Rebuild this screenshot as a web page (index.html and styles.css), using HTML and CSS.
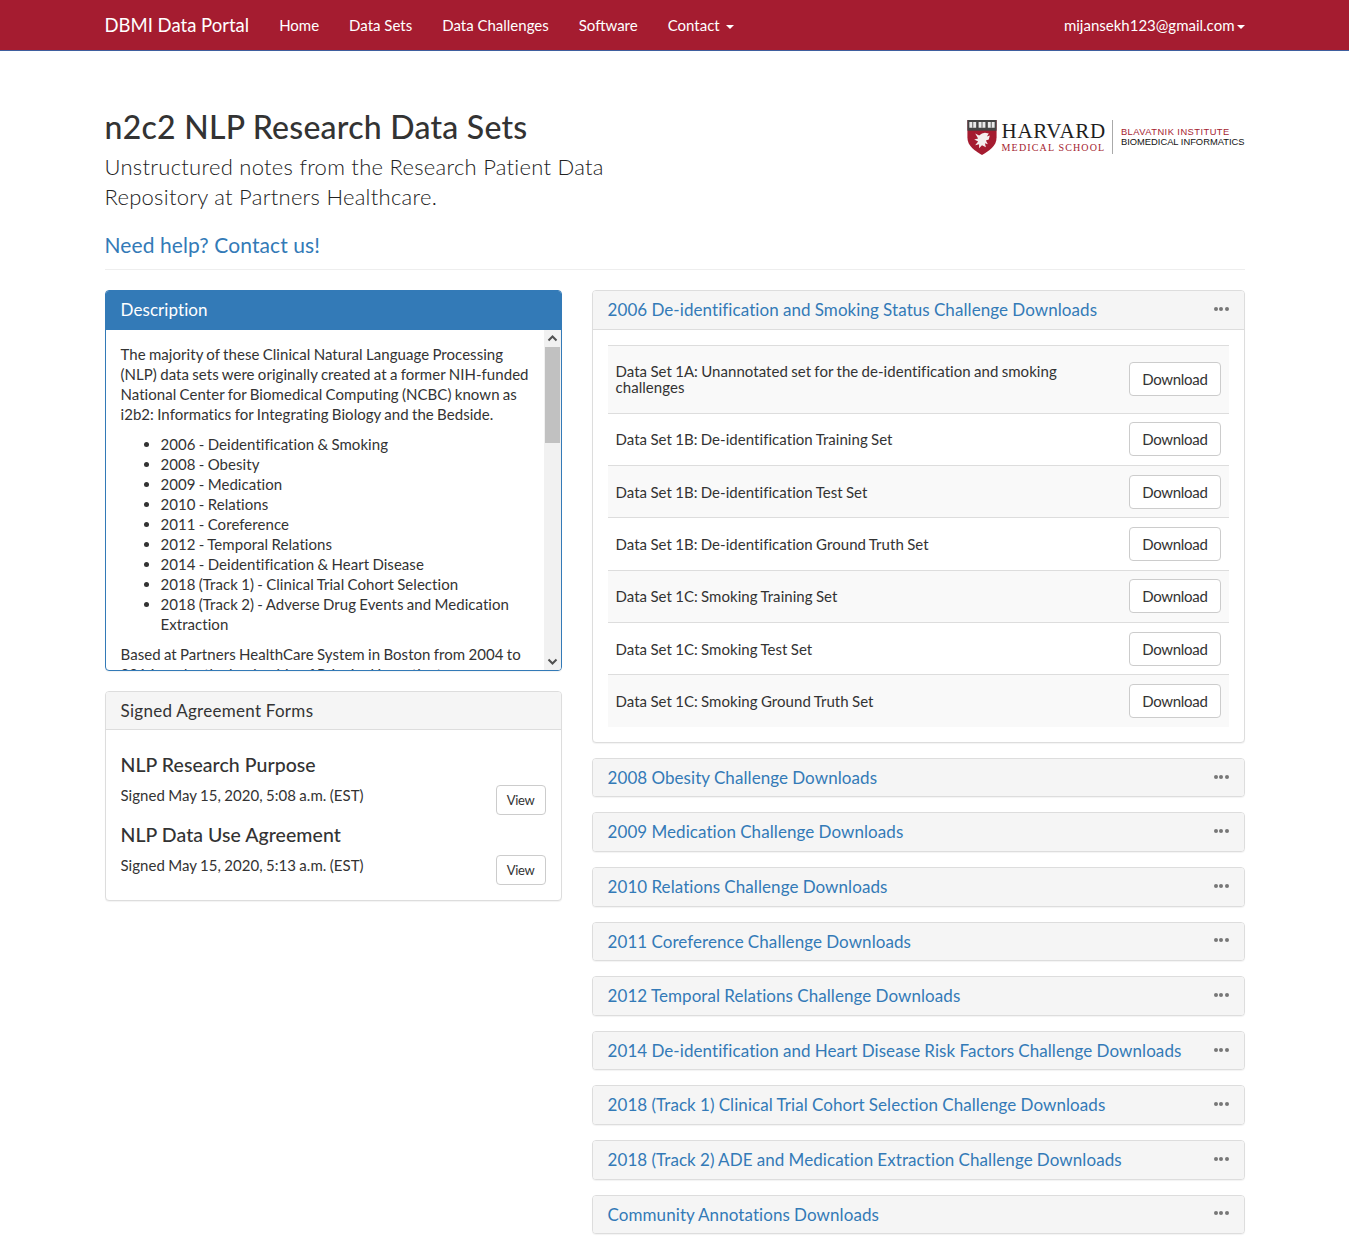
FILE: index.html
```html
<!DOCTYPE html>
<html lang="en">
<head>
    <meta charset="UTF-8">
    <meta name="viewport" content="width=device-width, initial-scale=1.0">
    <title>n2c2 NLP Research Data Sets</title>
    <link rel="stylesheet" href="styles.css">
</head>
<body>
    <nav class="navbar">
        <div class="container navbar-inner">
            <a class="brand" href="#">DBMI Data Portal</a>
            <ul class="nav-links">
                <li><a href="#">Home</a></li>
                <li><a href="#">Data Sets</a></li>
                <li><a href="#">Data Challenges</a></li>
                <li><a href="#">Software</a></li>
                <li><a href="#">Contact <span class="caret"></span></a></li>
            </ul>
            <a class="nav-user" href="#">mijansekh123@gmail.com<span class="caret"></span></a>
        </div>
    </nav>

    <div class="container">
        <header class="page-header">
            <div class="page-intro">
                <h1>n2c2 NLP Research Data Sets</h1>
                <p class="lead">Unstructured notes from the Research Patient Data Repository at Partners Healthcare.</p>
                <a class="help-link" href="#">Need help? Contact us!</a>
            </div>
            <div class="logo">
                <svg class="shield" width="30" height="35" viewBox="0 0 30 36">
                    <path d="M0 0H30V18C30 27 22 32 15 36C8 32 0 27 0 18Z" fill="#a51c30"/>
                    <path d="M0 0H30V11H0Z" fill="#444"/>
                    <path d="M2 2H9V8H2ZM11.500 2H18.500V8H11.500ZM21 2H28V8H21Z" fill="#e8e8e8"/>
                    <path d="M5.500 2V8M15 2V8M24.500 2V8" stroke="#555" stroke-width="1"/>
                    <path d="M8 14L12 16L15 14L18 13L22 14L20 17L23 16L22 20L19 21L21 25L18 24L19 28L15 26L12 29L12 25L8 26L11 22L7 20L11 19Z" fill="#f4efee"/>
                </svg>
                <div class="logo-hms">
                    <span class="logo-harvard">HARVARD</span>
                    <span class="logo-school">MEDICAL SCHOOL</span>
                </div>
                <div class="logo-dbmi">
                    <span class="logo-blav">BLAVATNIK INSTITUTE</span>
                    <span class="logo-bio">BIOMEDICAL INFORMATICS</span>
                </div>
            </div>
        </header>
        <hr class="divider">

        <div class="columns">
            <div class="col-left">
                <section class="panel panel-primary">
                    <div class="panel-heading">Description</div>
                    <div class="scroll-wrap">
                        <div class="scroll-text">
                            <p>The majority of these Clinical Natural Language Processing (NLP) data sets were originally created at a former NIH-funded National Center for Biomedical Computing (NCBC) known as i2b2: Informatics for Integrating Biology and the Bedside.</p>
                            <ul>
                                <li>2006 - Deidentification &amp; Smoking</li>
                                <li>2008 - Obesity</li>
                                <li>2009 - Medication</li>
                                <li>2010 - Relations</li>
                                <li>2011 - Coreference</li>
                                <li>2012 - Temporal Relations</li>
                                <li>2014 - Deidentification &amp; Heart Disease</li>
                                <li>2018 (Track 1) - Clinical Trial Cohort Selection</li>
                                <li>2018 (Track 2) - Adverse Drug Events and Medication Extraction</li>
                            </ul>
                            <p>Based at Partners HealthCare System in Boston from 2004 to 2014, under the leadership of Principal Investigator</p>
                        </div>
                        <div class="scrollbar">
                            <svg class="scroll-arrow" width="17" height="17" viewBox="0 0 17 17"><path d="M4.500 10.500L8.500 6.500L12.500 10.500" fill="none" stroke="#505050" stroke-width="2"/></svg>
                            <div class="scroll-track"><div class="scroll-thumb"></div></div>
                            <svg class="scroll-arrow" width="17" height="17" viewBox="0 0 17 17"><path d="M4.500 6.500L8.500 10.500L12.500 6.500" fill="none" stroke="#505050" stroke-width="2"/></svg>
                        </div>
                    </div>
                </section>

                <section class="panel">
                    <div class="panel-heading panel-heading-wide">Signed Agreement Forms</div>
                    <div class="panel-body forms">
                        <div class="form-item">
                            <div>
                                <h4>NLP Research Purpose</h4>
                                <p>Signed May 15, 2020, 5:08 a.m. (EST)</p>
                            </div>
                            <a class="btn btn-sm" href="#">View</a>
                        </div>
                        <div class="form-item">
                            <div>
                                <h4>NLP Data Use Agreement</h4>
                                <p>Signed May 15, 2020, 5:13 a.m. (EST)</p>
                            </div>
                            <a class="btn btn-sm" href="#">View</a>
                        </div>
                    </div>
                </section>
            </div>

            <div class="col-right">
                <section class="panel panel-open">
                    <div class="panel-heading accordion-heading">
                        <a href="#">2006 De-identification and Smoking Status Challenge Downloads</a>
                        <span class="dots"><i></i><i></i><i></i></span>
                    </div>
                    <div class="panel-body downloads">
                        <div class="download-row download-row-tall">
                            <span class="download-name">Data Set 1A: Unannotated set for the de-identification and smoking challenges</span>
                            <a class="btn" href="#">Download</a>
                        </div>
                        <div class="download-row">
                            <span class="download-name">Data Set 1B: De-identification Training Set</span>
                            <a class="btn" href="#">Download</a>
                        </div>
                        <div class="download-row">
                            <span class="download-name">Data Set 1B: De-identification Test Set</span>
                            <a class="btn" href="#">Download</a>
                        </div>
                        <div class="download-row">
                            <span class="download-name">Data Set 1B: De-identification Ground Truth Set</span>
                            <a class="btn" href="#">Download</a>
                        </div>
                        <div class="download-row">
                            <span class="download-name">Data Set 1C: Smoking Training Set</span>
                            <a class="btn" href="#">Download</a>
                        </div>
                        <div class="download-row">
                            <span class="download-name">Data Set 1C: Smoking Test Set</span>
                            <a class="btn" href="#">Download</a>
                        </div>
                        <div class="download-row">
                            <span class="download-name">Data Set 1C: Smoking Ground Truth Set</span>
                            <a class="btn" href="#">Download</a>
                        </div>
                    </div>
                </section>

                <section class="panel panel-closed"><div class="panel-heading accordion-heading"><a href="#">2008 Obesity Challenge Downloads</a><span class="dots"><i></i><i></i><i></i></span></div></section>
                <section class="panel panel-closed"><div class="panel-heading accordion-heading"><a href="#">2009 Medication Challenge Downloads</a><span class="dots"><i></i><i></i><i></i></span></div></section>
                <section class="panel panel-closed"><div class="panel-heading accordion-heading"><a href="#">2010 Relations Challenge Downloads</a><span class="dots"><i></i><i></i><i></i></span></div></section>
                <section class="panel panel-closed"><div class="panel-heading accordion-heading"><a href="#">2011 Coreference Challenge Downloads</a><span class="dots"><i></i><i></i><i></i></span></div></section>
                <section class="panel panel-closed"><div class="panel-heading accordion-heading"><a href="#">2012 Temporal Relations Challenge Downloads</a><span class="dots"><i></i><i></i><i></i></span></div></section>
                <section class="panel panel-closed"><div class="panel-heading accordion-heading"><a href="#">2014 De-identification and Heart Disease Risk Factors Challenge Downloads</a><span class="dots"><i></i><i></i><i></i></span></div></section>
                <section class="panel panel-closed"><div class="panel-heading accordion-heading"><a href="#">2018 (Track 1) Clinical Trial Cohort Selection Challenge Downloads</a><span class="dots"><i></i><i></i><i></i></span></div></section>
                <section class="panel panel-closed"><div class="panel-heading accordion-heading"><a href="#">2018 (Track 2) ADE and Medication Extraction Challenge Downloads</a><span class="dots"><i></i><i></i><i></i></span></div></section>
                <section class="panel panel-closed"><div class="panel-heading accordion-heading"><a href="#">Community Annotations Downloads</a><span class="dots"><i></i><i></i><i></i></span></div></section>
            </div>
        </div>
    </div>
</body>
</html>
```

FILE: styles.css
```css
* {
    box-sizing: border-box;
}
body {
    margin: 0;
    font-family: Lato, sans-serif;
    font-size: 15px;
    line-height: 20px;
    letter-spacing: .05px;
    word-spacing: -.6px;
    color: #333;
    background-color: #fff;
}
a {
    color: #337ab7;
    text-decoration: none;
}
.container {
    width: 1170px;
    margin: 0 auto;
    padding: 0 15px;
}

/* navbar */
.navbar {
    height: 51px;
    background-color: #a51c30;
    border-bottom: 1px solid #3f5f9e;
}
.navbar-inner {
    display: flex;
    align-items: center;
    height: 50px;
    letter-spacing: 0;
    word-spacing: 0;
}
.navbar a {
    color: #fff;
}
.brand {
    font-size: 18.500px;
    margin-right: 30px;
}
.nav-links {
    display: flex;
    gap: 30px;
    list-style: none;
    margin: 0;
    padding: 0;
}
.nav-user {
    margin-left: auto;
}
.caret {
    display: inline-block;
    width: 0;
    height: 0;
    margin-left: 2px;
    vertical-align: middle;
    border-top: 4px solid #fff;
    border-left: 4px solid transparent;
    border-right: 4px solid transparent;
}

/* page header */
.page-header {
    display: flex;
    justify-content: space-between;
    padding-top: 58px;
}
.page-intro {
    width: 520px;
}
h1 {
    margin: 0;
    font-size: 32px;
    line-height: 36px;
    font-weight: 500;
    letter-spacing: .25px;
    word-spacing: 0;
}
.lead {
    margin: 7px 0 0;
    font-size: 22px;
    line-height: 30px;
    font-weight: 300;
    letter-spacing: .27px;
    word-spacing: 0;
    color: #222;
}
.help-link {
    display: block;
    margin-top: 18px;
    font-size: 21px;
    line-height: 30px;
    letter-spacing: .1px;
    word-spacing: 0;
}
.logo {
    display: flex;
    align-items: flex-start;
    padding-top: 11px;
    word-spacing: 0;
}
.shield {
    margin-right: 5px;
}
.logo-hms {
    display: flex;
    flex-direction: column;
    padding-right: 6px;
    border-right: 1px solid #aaa;
    height: 34px;
}
.logo-harvard {
    font-family: "Liberation Serif", serif;
    font-size: 21px;
    line-height: 22px;
    letter-spacing: .7px;
    color: #1e1e1e;
}
.logo-school {
    font-family: "Liberation Serif", serif;
    font-size: 10px;
    line-height: 11px;
    letter-spacing: 1.150px;
    color: #a51c30;
}
.logo-dbmi {
    display: flex;
    flex-direction: column;
    padding: 7px 0 0 8px;
    font-family: "Liberation Sans", sans-serif;
    font-size: 9.350px;
    line-height: 10px;
}
.logo-blav {
    color: #a51c30;
    letter-spacing: .45px;
}
.logo-bio {
    color: #111;
    letter-spacing: 0;
}
.divider {
    margin: 9px 0 20px;
    border: 0;
    border-top: 1px solid #eee;
}

/* columns */
.columns {
    display: flex;
    gap: 30px;
    align-items: flex-start;
}
.col-left {
    width: 457px;
    flex: none;
}
.col-right {
    flex: 1;
    min-width: 0;
}

/* panels */
.panel {
    margin-bottom: 20px;
    background-color: #fff;
    border: 1px solid #ddd;
    border-radius: 4px;
    box-shadow: 0 1px 1px rgba(0, 0, 0, .05);
}
.panel-heading {
    padding: 10px 15px;
    font-size: 17px;
    line-height: 17.600px;
    letter-spacing: .08px;
    word-spacing: -.3px;
    color: #333;
    background-color: #f5f5f5;
    border-bottom: 1px solid #ddd;
    border-radius: 3px 3px 0 0;
}
.panel-heading-wide {
    letter-spacing: .3px;
}
.panel-primary {
    border-color: #337ab7;
}
.panel-primary .panel-heading {
    color: #fff;
    background-color: #337ab7;
    border-bottom-color: #337ab7;
}
.panel-open,
.panel-closed {
    margin-bottom: 15px;
}
.panel-closed .panel-heading {
    border-bottom: 0;
    border-radius: 3px;
}
.accordion-heading {
    display: flex;
    justify-content: space-between;
    align-items: center;
}
.dots {
    display: flex;
    gap: 1.500px;
    margin-top: -2px;
}
.dots i {
    width: 4px;
    height: 4px;
    border-radius: 50%;
    background-color: #777;
}

/* description box */
.scroll-wrap {
    display: flex;
    height: 340px;
    overflow: hidden;
    border-radius: 0 0 3px 3px;
}
.scroll-text {
    flex: 1;
    min-width: 0;
    padding: 14px 10px 0 15px;
    overflow: hidden;
}
.scroll-text p {
    margin: 0 0 10px;
}
.scroll-text ul {
    margin: 0 0 10px;
    padding-left: 40px;
}
.scrollbar {
    display: flex;
    flex-direction: column;
    width: 17px;
    flex: none;
    background-color: #f1f1f1;
}
.scroll-arrow {
    flex: none;
}
.scroll-track {
    flex: 1;
}
.scroll-thumb {
    width: 15px;
    margin: 0 auto;
    height: 96px;
    background-color: #c1c1c1;
}

/* signed forms */
.forms {
    padding: 15px;
}
.form-item {
    display: flex;
    justify-content: space-between;
    align-items: flex-end;
}
.form-item h4 {
    margin: 10px 0;
    font-size: 19.500px;
    line-height: 20px;
    font-weight: 500;
    word-spacing: 0;
}
.form-item p {
    margin: 0 0 10px;
}

/* buttons */
.btn {
    display: inline-block;
    padding: 6px 12px;
    letter-spacing: -.3px;
    color: #333;
    background-color: #fff;
    border: 1px solid #ccc;
    border-radius: 4px;
    flex: none;
}
.btn-sm {
    padding: 5px 10px;
    font-size: 13px;
    line-height: 18px;
    letter-spacing: -.3px;
}

/* download table */
.downloads {
    padding: 15px;
}
.download-row {
    display: flex;
    align-items: center;
    justify-content: space-between;
    gap: 30px;
    padding: 8.700px 8px;
    border-top: 1px solid #ddd;
    line-height: 16px;
}
.download-row .btn {
    line-height: 20px;
}
.download-row:nth-child(odd) {
    background-color: #f9f9f9;
}
.download-row-tall {
    padding: 16.500px 8px;
}
```
